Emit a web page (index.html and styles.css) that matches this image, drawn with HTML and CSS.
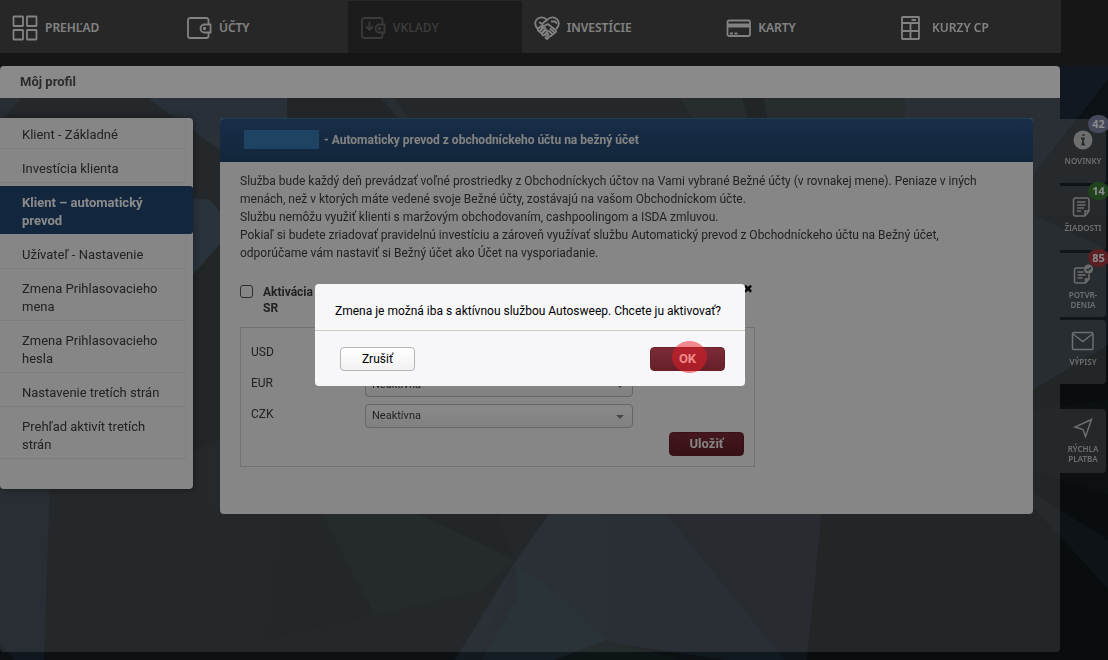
FILE: index.html
```html
<!DOCTYPE html>
<html lang="sk">

<head>
	<meta charset="UTF-8">
	<meta name="viewport" content="width=device-width, initial-scale=1.0">
	<title>Môj profil</title>
	<link rel="stylesheet" href="styles.css">
</head>

<body>

	<!-- Faceted background -->
	<svg class="facets" viewBox="0 0 1108 660" preserveAspectRatio="xMidYMid slice" aria-hidden="true">
		<rect width="1108" height="660" fill="#171f24" />
		<polygon points="0,66 45,66 0,125" fill="#1f2b36" />
		<polygon points="150,100 175,66 287,66 287,200 220,150" fill="#203040" />
		<polygon points="287,66 370,66 470,240 287,240" fill="#12191d" />
		<polygon points="381,98 394,98 408,118 398,118" fill="#1c2830" />
		<polygon points="660,66 742,98 760,160 720,160" fill="#1c282e" />
		<polygon points="742,98 764,98 775,130 750,130" fill="#11171a" />
		<polygon points="764,98 905,98 905,160 775,160" fill="#1c282e" />
		<polygon points="905,66 1108,66 1108,80 1033,175 905,160" fill="#202d3a" />
		<polygon points="1108,84 1108,215 1033,215 1033,175" fill="#18222a" />
		<polygon points="1033,215 1108,250 1108,345 1033,390" fill="#1e2a35" />
		<polygon points="1033,390 1108,345 1108,400 1033,410" fill="#11181c" />
		<polygon points="193,198 210,200 220,212 220,244 193,275" fill="#22384c" />
		<polygon points="193,275 220,244 220,440 193,450" fill="#10181c" />
		<polygon points="0,480 50,480 44,660 15,660 0,644" fill="#1f2c3a" />
		<polygon points="193,450 220,445 220,514 193,490" fill="#172026" />
		<polygon points="284,510 320,510 375,615 268,640" fill="#141c21" />
		<polygon points="320,510 410,510 515,560 480,590 375,615" fill="#172328" />
		<polygon points="410,510 496,510 515,560" fill="#12191d" />
		<polygon points="552,510 663,510 785,660 727,660 606,642 555,660 455,660 515,562" fill="#22303c" />
		<polygon points="515,562 560,595 606,640 552,660 478,660 518,595" fill="#243641" />
		<polygon points="515,562 518,595 482,660 478,660" fill="#202d39" />
		<polygon points="606,510 663,510 785,660 727,660 606,640" fill="#212f3b" />
		<polygon points="606,640 540,667 727,672" fill="#19252a" />
		<polygon points="663,510 822,510 807,660 785,660" fill="#1d2630" />
		<polygon points="822,510 1033,490 1108,589 1108,660 807,660" fill="#11181b" />
		<polygon points="1033,493 1108,540 1108,589 1033,507" fill="#192329" />
		<polygon points="1033,470 1108,495 1108,540 1033,493" fill="#13191d" />
	</svg>

	<header class="topbar">
		<nav class="main-nav">
			<a class="nav-item" href="#">
				<svg class="nav-icon" viewBox="0 0 26 26">
					<rect x="1.5" y="1.5" width="9.5" height="9.5" rx="0.5" />
					<rect x="15" y="1.5" width="9.5" height="9.5" rx="0.5" />
					<rect x="1.5" y="15" width="9.5" height="9.5" rx="0.5" />
					<rect x="15" y="15" width="9.5" height="9.5" rx="0.5" />
				</svg>
				Prehľad
			</a>
			<a class="nav-item" href="#">
				<svg class="nav-icon" viewBox="0 0 26 26">
					<path d="M22.500 9V5a2 2 0 0 0-2-2H4a2 2 0 0 0-2 2v16a2 2 0 0 0 2 2h16.500a2 2 0 0 0 2-2v-3" />
					<path d="M24.500 9.500h-6a4 4 0 0 0 0 8h6z" />
					<circle cx="18.500" cy="13.500" r="0.800" />
				</svg>
				Účty
			</a>
			<a class="nav-item nav-item-disabled" href="#" aria-disabled="true">
				<svg class="nav-icon" viewBox="0 0 26 26">
					<path d="M22.500 9V5a2 2 0 0 0-2-2H4a2 2 0 0 0-2 2v16a2 2 0 0 0 2 2h16.500a2 2 0 0 0 2-2v-3" />
					<path d="M24.500 9.500h-5a4 4 0 0 0 0 8h5z" />
					<circle cx="19.500" cy="13.500" r="0.800" />
					<path d="M9.500 6.500v8M6 11.500l3.500 3.500 3.500-3.500" />
				</svg>
				Vklady
			</a>
			<a class="nav-item" href="#">
				<svg class="nav-icon" viewBox="0 0 26 26">
					<path d="M4 14C1 11 .5 7.500 2.500 4.800 5 1.500 10 1.500 13 5c3-3.500 8-3.500 10.500-.2 2 2.700 1.500 6.200-1.500 9.200" />
					<path d="M13 5L8.500 8.500c-1 1.500 1 3 2.500 2l3-1.500 8 6.500M17 6.500h4l2 2M5 7l3 2" />
					<path d="M4 14l2.500-2.500c1-.8 2.500.4 1.700 1.500L6 16c-1.200 1-2.800-.8-2-2zM6 16l3.500-3.500c1.500-.6 2.300.8 1.500 1.800l-3 3.500c-1.200.8-2.500-.5-2-1.800zM8 18.500l3.500-3.500c1.500-.3 2.200 1 1.500 2l-2.500 3c-1.200.8-2.700 0-2.500-1.500zM10.500 20.500l2.200-2.200c1.300-.3 2 .7 1.300 1.700l-1.500 2" />
					<path d="M22 15.500c.8 1.500-.8 2.500-2 1.500l-4-3.500M20 17.500c.5 1.500-1 2.300-2 1.500l-3.500-3.500M18 19.500c.2 1.300-1.500 2-2.500 1M15.500 21.500L13 24l-2-2" />
				</svg>
				Investície
			</a>
			<a class="nav-item" href="#">
				<svg class="nav-icon" viewBox="0 0 26 26">
					<rect x="2.500" y="5.500" width="22.500" height="15.500" rx="1.500" />
					<path d="M2.500 9.500H25M2.500 11.500H25" />
					<path d="M5 18.500h3M9.500 18.500h3" />
				</svg>
				Karty
			</a>
			<a class="nav-item" href="#">
				<svg class="nav-icon" viewBox="0 0 26 26">
					<rect x="3" y="2" width="17" height="22" rx="0.500" />
					<path d="M3 8h17M11.500 8v16M3 16h17M12.500 5H17" />
				</svg>
				Kurzy CP
			</a>
		</nav>
	</header>

	<div class="layout">
		<main class="page">
			<h1 class="page-title">Môj profil</h1>
			<div class="page-content">
				<nav class="side-menu">
					<a class="side-link" href="#">Klient - Základné</a>
					<a class="side-link" href="#">Investícia klienta</a>
					<a class="side-link side-link-active" href="#">Klient – automatický prevod</a>
					<a class="side-link" href="#">Užívateľ - Nastavenie</a>
					<a class="side-link" href="#">Zmena Prihlasovacieho mena</a>
					<a class="side-link" href="#">Zmena Prihlasovacieho hesla</a>
					<a class="side-link" href="#">Nastavenie tretích strán</a>
					<a class="side-link" href="#">Prehľad aktivít tretích strán</a>
				</nav>

				<section class="panel">
					<h2 class="panel-header">
						<span class="masked"></span>
						- Automaticky prevod z obchodníckeho účtu na bežný účet
					</h2>
					<div class="panel-body">
						<div class="intro">
							<p>Služba bude každý deň prevádzať voľné prostriedky z Obchodníckych účtov na Vami vybrané Bežné účty (v rovnakej mene). Peniaze v iných menách, než v ktorých máte vedené svoje Bežné účty, zostávajú na vašom Obchodníckom účte.</p>
							<p>Službu nemôžu využiť klienti s maržovým obchodovaním, cashpoolingom a ISDA zmluvou.</p>
							<p>Pokiaľ si budete zriadovať pravidelnú investíciu a zároveň využívať službu Automatický prevod z Obchodníckeho účtu na Bežný účet, odporúčame vám nastaviť si Bežný účet ako Účet na vysporiadanie.</p>
						</div>

						<form class="sweep-form">
							<div class="activation">
								<input class="check" type="checkbox" id="activate">
								<label class="activation-label" for="activate">Aktivácia<br>SR</label>
								<span class="activation-state">✖</span>
							</div>
							<div class="currencies">
								<div class="currency-row">
									<label for="usd">USD</label>
									<div class="select-wrap"><select class="select" id="usd"><option>Neaktívna</option><option>Aktívna</option></select></div>
								</div>
								<div class="currency-row">
									<label for="eur">EUR</label>
									<div class="select-wrap"><select class="select" id="eur"><option>Neaktívna</option><option>Aktívna</option></select></div>
								</div>
								<div class="currency-row">
									<label for="czk">CZK</label>
									<div class="select-wrap"><select class="select" id="czk"><option>Neaktívna</option><option>Aktívna</option></select></div>
								</div>
								<div class="form-actions">
									<button class="btn btn-primary" type="button">Uložiť</button>
								</div>
							</div>
						</form>
					</div>
				</section>
			</div>
		</main>

		<aside class="shortcuts">
			<a class="shortcut" href="#">
				<svg class="shortcut-icon" viewBox="0 0 24 24">
					<circle cx="12" cy="12" r="9.500" fill="#ccc" stroke="none" />
					<g stroke="#444c50" stroke-width="2.500"><path d="M12.500 6.300v1.500" /><path d="M10 10.500h2.500l-1 6h2.500" stroke-width="2" /></g>
				</svg>
				Novinky
				<span class="badge badge-blue">42</span>
			</a>
			<a class="shortcut" href="#">
				<svg class="shortcut-icon" viewBox="0 0 24 24">
					<path d="M14 21H4.500a2 2 0 0 1-2-2V5a2 2 0 0 1 2-2H16a2 2 0 0 1 2 2v11zM14 21v-5h4M6 7h8.500M6 10h8.500M6 13h7M6 16h4" />
				</svg>
				Žiadosti
				<span class="badge badge-green">14</span>
			</a>
			<a class="shortcut" href="#">
				<svg class="shortcut-icon" viewBox="0 0 24 24">
					<path d="M13 6H5.500a2 2 0 0 0-2 2v11a2 2 0 0 0 2 2h9l3.500-4v-5M14.500 21v-4H18M6.500 10h6M6.500 13h8M6.500 16h5" />
					<circle cx="17.500" cy="7" r="4.500" fill="#ccc" stroke="none" />
					<path d="M15.500 7l1.500 1.500 3-3" stroke="#444c50" />
				</svg>
				Potvr-<br>denia
				<span class="badge badge-red">85</span>
			</a>
			<a class="shortcut" href="#">
				<svg class="shortcut-icon" viewBox="0 0 24 24">
					<rect x="1.500" y="3.500" width="20.500" height="17" rx="1.500" />
					<path d="M2 5l9.800 7.500L21.500 5" />
				</svg>
				Výpisy
			</a>
			<a class="shortcut shortcut-payment" href="#">
				<svg class="shortcut-icon" viewBox="0 0 24 24">
					<path d="M20.500 3.500L4 11l8 2.500L14.500 20.500z" />
				</svg>
				Rýchla<br>platba
			</a>
		</aside>
	</div>

	<div class="overlay">
		<div class="modal" role="dialog" aria-modal="true" aria-labelledby="modal-text">
			<p class="modal-text" id="modal-text">Zmena je možná iba s aktívnou službou Autosweep. Chcete ju aktivovať?</p>
			<div class="modal-actions">
				<button class="btn btn-default" type="button">Zrušiť</button>
				<button class="btn btn-primary btn-pressed" type="button">OK</button>
			</div>
		</div>
	</div>

</body>

</html>
```
FILE: styles.css
```css
* {
	box-sizing: border-box;
}

body {
	margin: 0;
	min-height: 100vh;
	display: flex;
	flex-direction: column;
	background-color: #171f24;
	color: #404040;
	font-family: Roboto, "Noto Sans", sans-serif;
	font-size: 12px;
	line-height: 18px;
}

a {
	color: inherit;
	text-decoration: none;
}

p,
h1,
h2 {
	margin: 0;
}

.facets {
	position: fixed;
	inset: 0;
	z-index: -1;
	width: 100%;
	height: 100%;
}

/* Top navigation */
.topbar {
	height: 66px;
	padding-right: 47px;
	background-color: #292929;
}

.main-nav {
	display: grid;
	grid-template-columns: 10fr 10fr 10fr 11fr 10fr 10fr;
	height: 53px;
	background-color: #484848;
}

.nav-item {
	display: flex;
	align-items: center;
	gap: 7px;
	padding: 2px 0 0 12px;
	color: #f0f0f0;
	font-family: "Noto Sans", sans-serif;
	font-weight: 600;
	text-transform: uppercase;
}

.nav-item-disabled {
	margin-top: 1px;
	padding-top: 1px;
	background-color: #343434;
	color: #6c6c6c;
}

.nav-icon {
	width: 26px;
	height: 26px;
	fill: none;
	stroke: currentColor;
	stroke-width: 1.8;
}

/* Page */
.layout {
	flex: 1;
	display: flex;
	padding-bottom: 8px;
}

.page {
	flex: 1;
	display: flex;
	flex-direction: column;
}

.page-title {
	padding: 7px 20px;
	border-radius: 4px 4px 0 0;
	background-color: #fff;
	color: #505050;
	font-size: 13px;
	line-height: 18px;
	font-weight: 700;
}

.page-content {
	flex: 1;
	display: flex;
	align-items: flex-start;
	gap: 27px;
	padding: 20px 27px 20px 0;
	border-radius: 0 0 4px 4px;
	background-color: rgba(255, 255, 255, 0.2);
}

.side-menu {
	flex: 0 0 193px;
	padding-bottom: 30px;
	border-radius: 0 4px 4px 4px;
	background-color: #f7f7f7;
	box-shadow: 0 0 8px rgba(0, 0, 0, 0.4);
	font-size: 13px;
}

.side-link {
	display: block;
	margin-right: 7px;
	padding: 11px 16px 4px 22px;
	border-right: 1px solid #eee;
	border-bottom: 1px solid #e6e6e6;
}

.side-link:first-child {
	padding-top: 8px;
}

.side-link-active {
	margin: 3px 0 1px;
	padding: 8px 40px 4px 22px;
	border: 0;
	border-radius: 0 3px 3px 0;
	background-color: #224771;
	color: #fff;
	font-weight: 700;
}

.panel {
	flex: 1;
	border-radius: 4px;
	background-color: #f7f7f7;
}

.panel-header {
	display: flex;
	align-items: center;
	gap: 5px;
	height: 44px;
	padding: 0 24px 2px;
	border-top: 1px solid #3b7099;
	border-radius: 4px 4px 0 0;
	background-image: linear-gradient(#2e5785, #21456d);
	color: #f0f0f0;
	font-size: 12px;
	font-weight: 700;
}

.masked {
	width: 75px;
	height: 19px;
	background-color: #397cb8;
}

.panel-body {
	padding: 10px 28px 47px 20px;
}

.intro {
	margin-bottom: 22px;
}

/* Activation form */
.sweep-form {
	max-width: 515px;
}

.activation {
	display: flex;
	align-items: flex-start;
	margin-bottom: 11px;
	line-height: 16px;
}

.check {
	appearance: none;
	width: 13px;
	height: 13px;
	margin: 1px 10px 0 0;
	border: 1px solid #555;
	border-radius: 3px;
}

.activation-label {
	font-weight: 700;
}

.activation-state {
	margin: -3px 2px 0 auto;
	color: #111;
	font-family: "DejaVu Sans", sans-serif;
}

.currencies {
	display: grid;
	gap: 7px;
	padding: 14px 10px 10px;
	border: 1px solid #d5d5cc;
}

.currency-row {
	display: grid;
	grid-template-columns: 114px 268px;
	height: 24px;
	line-height: 20px;
}

.select-wrap {
	position: relative;
}

/* Drop-down arrow */
.select-wrap::after {
	content: "";
	position: absolute;
	top: 11px;
	right: 9px;
	border: 4px solid transparent;
	border-top-color: #888;
	border-bottom: 0;
	pointer-events: none;
}

.select {
	appearance: none;
	width: 100%;
	height: 24px;
	padding: 0 24px 0 6px;
	border: 1px solid #bbb;
	border-radius: 4px;
	background-color: transparent;
	background-image: linear-gradient(#fff, #eee);
	color: #404040;
	font: inherit;
	font-size: 11px;
}

.form-actions {
	margin-top: -3px;
	text-align: right;
	line-height: 0;
}

.btn {
	width: 75px;
	height: 24px;
	padding: 0;
	border-radius: 4px;
	font-family: inherit;
	font-size: 12px;
	line-height: 18px;
}

.btn-primary {
	border: 1px solid #6b2029;
	background-image: linear-gradient(#7c2b36, #65202a);
	color: #f5f0f0;
	font-size: 13px;
	font-weight: 700;
}

.btn-default {
	border: 1px solid #b5b5b5;
	background-image: linear-gradient(#fff, #f1f1f1);
	color: #000;
}

/* Right shortcuts */
.shortcuts {
	flex: 0 0 48px;
	display: flex;
	flex-direction: column;
	gap: 3px;
	padding-top: 53px;
	overflow: hidden;
}

.shortcut {
	position: relative;
	display: flex;
	flex-direction: column;
	align-items: center;
	width: 46px;
	height: 64px;
	padding-top: 9px;
	border-radius: 0 4px 4px 0;
	background-color: rgba(255, 255, 255, 0.2);
	color: #ccc;
	font-family: "Noto Sans", sans-serif;
	font-size: 8px;
	line-height: 10px;
	font-weight: 600;
	text-align: center;
	text-transform: uppercase;
}

.shortcut-payment {
	margin-top: 22px;
	padding-top: 7px;
}

.shortcut-icon {
	width: 24px;
	height: 24px;
	margin-bottom: 4px;
	fill: none;
	stroke: currentColor;
	stroke-width: 1.5;
}

.badge {
	position: absolute;
	top: -4px;
	left: 28px;
	width: 21px;
	height: 18px;
	border-radius: 9px;
	color: #fff;
	font-size: 11px;
	line-height: 18px;
	font-weight: 700;
}

.badge-blue {
	background-color: #8088a8;
}

.badge-green {
	background-color: #3c7a36;
}

.badge-red {
	background-color: #a83a44;
}

/* Confirmation dialog */
.overlay {
	position: fixed;
	inset: 0;
	z-index: 10;
	display: flex;
	align-items: center;
	justify-content: center;
	padding: 10px 48px 0 0;
	background-color: rgba(0, 0, 0, 0.46);
}

.modal {
	width: 430px;
	border-radius: 4px;
	background-color: #f7f7fa;
	color: #000;
}

.modal-text {
	padding: 18px 0 10px 20px;
	border-bottom: 1px solid #ccccbe;
}

.modal-actions {
	display: flex;
	justify-content: space-between;
	padding: 16px 20px 15px 25px;
}

.btn-pressed {
	position: relative;
}

/* Click marker over the pressed button */
.btn-pressed::after {
	content: "";
	position: absolute;
	top: -7px;
	left: 21px;
	width: 35px;
	height: 32px;
	border-radius: 50%;
	background-color: rgba(237, 28, 36, 0.5);
}
```
